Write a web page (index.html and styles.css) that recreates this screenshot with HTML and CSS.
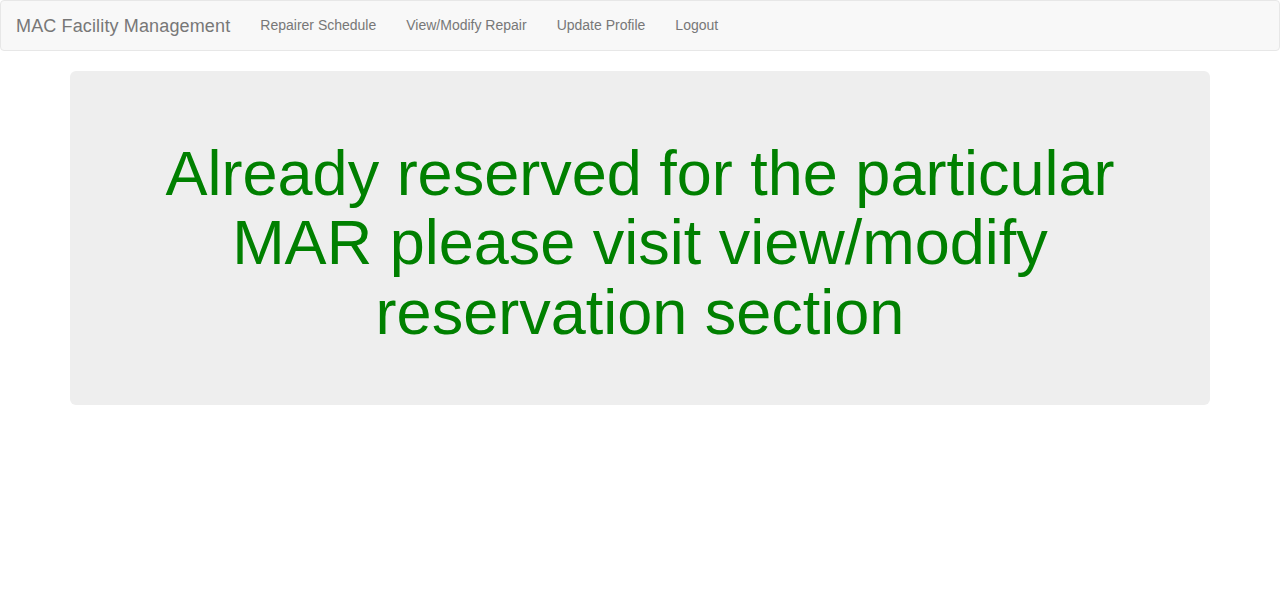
FILE: index.html
```html
<!DOCTYPE html>
<html>
<head>
<meta charset="utf-8">
<title>MAC Facility Management</title>
<link rel="stylesheet" href="styles.css">
</head>
<body>
<nav class="navbar">
  <a class="brand" href="#">MAC Facility Management</a>
  <ul class="nav-links">
    <li><a href="#">Repairer Schedule</a></li>
    <li><a href="#">View/Modify Repair</a></li>
    <li><a href="#">Update Profile</a></li>
    <li><a href="#">Logout</a></li>
  </ul>
</nav>
<div class="container">
  <div class="jumbotron">
    <h1 class="message">Already reserved for the particular MAR please visit view/modify reservation section</h1>
  </div>
</div>
</body>
</html>
```

FILE: styles.css
```css
* { box-sizing: border-box; }
html, body { margin: 0; padding: 0; }
body {
  font-family: "Liberation Sans", Arial, Helvetica, sans-serif;
  font-size: 14px;
  line-height: 1.42857143;
  color: #333;
  background: #fff;
}
.navbar {
  display: flex;
  align-items: center;
  height: 51px;
  background: #f8f8f8;
  border: 1px solid #e7e7e7;
  border-radius: 4px;
  margin-bottom: 20px;
}
.brand {
  font-size: 18px;
  line-height: 20px;
  padding: 14px 15px;
  color: #777;
  text-decoration: none;
  letter-spacing: 0.14px;
}
.nav-links {
  display: flex;
  list-style: none;
  margin: 0;
  padding: 0;
}
.nav-links a {
  display: block;
  padding: 13px 15px 15px;
  line-height: 20px;
  font-size: 14px;
  color: #777;
  text-decoration: none;
}
.container {
  width: 1170px;
  margin: 0 auto;
  padding: 0 15px;
}
.jumbotron {
  background: #eee;
  border-radius: 6px;
  padding: 48px 60px;
}
.message {
  margin: 20px 0 10px;
  font-size: 63px;
  font-weight: 500;
  line-height: 1.1;
  color: green;
  text-align: center;
}
```
